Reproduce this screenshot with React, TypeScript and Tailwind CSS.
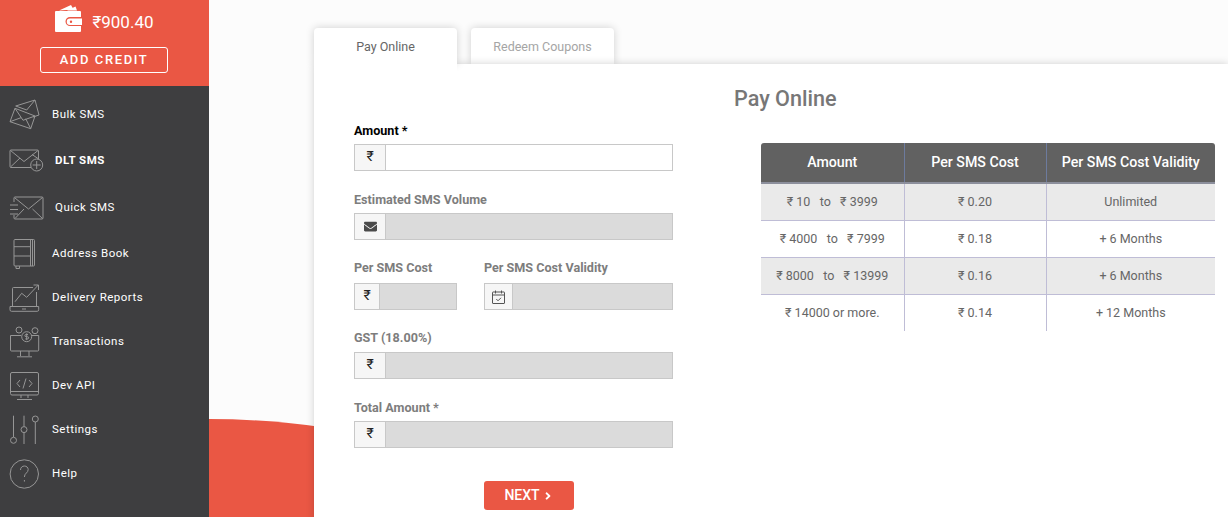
import { ReactNode } from "react";
import { FaAngleRight, FaEnvelope } from "react-icons/fa";

const iconClass = "overflow-visible fill-none stroke-[#969696]";

// viewBox numbers follow the sidebar's own pixel grid, one box per row
const NavIcon = ({ y, children }: { y: number; children: ReactNode }) => (
  <svg width="34" height="30" viewBox={`10 ${y} 34 30`} className={iconClass} strokeWidth="1">
    {children}
  </svg>
);

const NAV = [
  {
    label: "Bulk SMS",
    row: "h-[46px]",
    text: "",
    icon: (
      <NavIcon y={99}>
        <path d="M15.7 106 35 100l4 15-6 2" />
        <path d="m15.7 106 11 4 8.3-10" />
        <path d="m15 108.300 20 7.700-4.300 12.700-20.700-7z" />
        <path d="m15 108.300 8 12 12-4.300M10 121.700l11-4M30.700 128.700l-5-10" />
      </NavIcon>
    ),
  },
  {
    label: "DLT SMS",
    row: "h-[46px]",
    text: "ml-[3px] font-bold",
    icon: (
      <NavIcon y={145}>
        <path d="M31 167.500H11a1 1 0 0 1-1-1V151a1 1 0 0 1 1-1h26.500a1 1 0 0 1 1 1v8" />
        <path d="m10.500 150.500 13.500 11 14-11M10.500 167l9.500-9M38 158.500l-6-4" />
        <circle cx="36.700" cy="165" r="6" />
        <path d="M36.700 161v8M32.700 165h8" />
      </NavIcon>
    ),
  },
  {
    label: "Quick SMS",
    row: "h-[47px]",
    text: "ml-[3px]",
    icon: (
      <NavIcon y={192}>
        <path d="M14 202v-4a1 1 0 0 1 1-1h27a1 1 0 0 1 1 1v20a1 1 0 0 1-1 1H15a1 1 0 0 1-1-1v-3" />
        <path d="m15 198 13.500 11 14-11.500M15 218.500l9-9.500M42.500 218.500l-10-9.500" />
        <path d="M10 205h8M10 209.500h8M10 214h8" />
      </NavIcon>
    ),
  },
  {
    label: "Address Book",
    row: "h-[45px]",
    text: "",
    icon: (
      <NavIcon y={238}>
        <rect x="14" y="239.500" width="20.500" height="26.500" rx="1" />
        <path d="M30.500 239.500V266M32.500 239.500V266M14 246.700h16.500M14 256h16.500M16 266v2.500h3.500V266" />
      </NavIcon>
    ),
  },
  {
    label: "Delivery Reports",
    row: "h-[44px]",
    text: "",
    icon: (
      <NavIcon y={282}>
        <path d="M33 287.500H13.500a1 1 0 0 0-1 1V306M36.500 292v14" />
        <path d="M10 306.500h28.700v3.300a1.500 1.500 0 0 1-1.500 1.500H11.500a1.500 1.500 0 0 1-1.500-1.500zM22 309h4" />
        <path d="m15 301.700 6.700-8.400 5 4L38.300 285M33.500 285h5v5" />
      </NavIcon>
    ),
  },
  {
    label: "Transactions",
    row: "h-[44px]",
    text: "",
    icon: (
      <NavIcon y={326}>
        <path d="M21 335.500H10.500V350a1 1 0 0 0 1 1h26.200a1 1 0 0 0 1-1v-14.500H32" />
        <circle cx="26.700" cy="336.700" r="5" />
        <circle cx="19" cy="330" r="3" />
        <circle cx="35" cy="330.700" r="3" />
        <path d="M28 334.500h-2a1 1 0 0 0 0 2.200h1.500a1 1 0 0 1 0 2.200h-2.200M26.700 333.300v6.800M20.500 351v5M29 351v5M17 356.800h15" />
      </NavIcon>
    ),
  },
  {
    label: "Dev API",
    row: "h-[44px]",
    text: "",
    icon: (
      <NavIcon y={370}>
        <rect x="10.500" y="372.500" width="28" height="22.500" rx="1.500" />
        <path d="M10.500 391.500h28M21 395v3M28 395v3M17 399.500h15" />
        <path d="m20 380-3 3.500 3 3.500M29 380l3 3.500-3 3.500M26 378.500l-3 10" />
      </NavIcon>
    ),
  },
  {
    label: "Settings",
    row: "h-[44px]",
    text: "",
    icon: (
      <NavIcon y={414}>
        <path d="M13.500 415.700V437M24 415.700V426.500M24 432.700V444M35.300 422V444" />
        <circle cx="13.500" cy="440.300" r="3" />
        <circle cx="24" cy="429.600" r="3" />
        <circle cx="35.300" cy="419" r="3" />
      </NavIcon>
    ),
  },
  {
    label: "Help",
    row: "h-[44px]",
    text: "",
    icon: (
      <NavIcon y={458}>
        <circle cx="24.300" cy="474" r="14.200" />
        <path d="M20.500 470c0-2.500 1.800-4 3.900-4s3.800 1.500 3.800 3.600c0 3.300-3.800 3.500-3.800 7.400" />
        <path d="M24.400 480v1.600" />
      </NavIcon>
    ),
  },
];

const RATES = [
  { amount: "₹ 10   to   ₹ 3999", cost: "₹ 0.20", validity: "Unlimited" },
  { amount: "₹ 4000   to   ₹ 7999", cost: "₹ 0.18", validity: "+ 6 Months" },
  { amount: "₹ 8000   to   ₹ 13999", cost: "₹ 0.16", validity: "+ 6 Months" },
  { amount: "₹ 14000 or more.", cost: "₹ 0.14", validity: "+ 12 Months" },
];

const Rupee = () => <span className="-mt-[3px] text-[14px] leading-none text-[#222]">₹</span>;

const Field = ({
  label,
  prefix = <Rupee />,
  prefixWidth = "w-[31px]",
  labelGap = "mb-[7px]",
  active = false,
  className = "",
}: {
  label: string;
  prefix?: ReactNode;
  prefixWidth?: string;
  labelGap?: string;
  active?: boolean;
  className?: string;
}) => (
  <div className={className}>
    <label className={`block h-[14px] text-[12.600px] leading-[14px] font-bold ${labelGap} ${active ? "text-black" : "text-[#7d7d7d]"}`}>
      {label}
    </label>
    <div className="flex h-[27px] border border-[#c8c8c8]">
      <div className={`flex flex-none items-center justify-center border-r border-[#c8c8c8] bg-[#f6f6f6] ${prefixWidth}`}>
        {prefix}
      </div>
      <div className={`flex-1 ${active ? "bg-white" : "bg-[#dbdbdb]"}`} />
    </div>
  </div>
);

const App = () => (
  <div className="flex h-[517px] w-full overflow-hidden bg-[#fcfcfc] [font-family:Roboto,sans-serif]">
    <aside className="flex w-[209px] flex-none flex-col bg-[#3e3e40]">
      <div className="flex h-[86px] flex-none flex-col items-center bg-[#ea5744]">
        <div className="mt-[5px] flex h-[27px] items-center">
          <svg width="27" height="27" viewBox="54 5 27 27" className="fill-white">
            <path d="m58 10.500 12-5.500 2.500 4.500zM66 10.500l8.500-4 1.500 4z" />
            <path d="M55 11h24a1 1 0 0 1 1 1v5H69a4.500 4.500 0 0 0 0 9h11v5a1 1 0 0 1-1 1H55a1 1 0 0 1-1-1V12a1 1 0 0 1 1-1z" />
            <path d="M69 18.500h12V25H69a3.250 3.250 0 0 1 0-6.500zm1 2a1.200 1.200 0 1 0 0 2.400 1.200 1.200 0 0 0 0-2.400z" fillRule="evenodd" />
          </svg>
          <span className="ml-[10px] pt-[7px] text-[17px] leading-none text-white">₹900.40</span>
        </div>
        <button className="mt-[15px] -ml-[1px] h-[26px] w-[128px] rounded-[3px] border border-white text-[13px] font-medium tracking-[1.600px] text-white">
          ADD CREDIT
        </button>
      </div>
      <nav className="pt-[5px]">
        {NAV.map((item) => (
          <div key={item.label} className={`flex items-center pl-[10px] ${item.row}`}>
            <div className="flex w-[42px] flex-none">{item.icon}</div>
            <span className={`pt-[2px] text-[11.500px] tracking-[0.5px] text-white ${item.text}`}>{item.label}</span>
          </div>
        ))}
      </nav>
    </aside>

    <main className="relative flex-1 overflow-hidden pt-[28px] pl-[105px]">
      <div className="absolute top-[419px] left-[-787px] h-[1574px] w-[1574px] rounded-full bg-[#ea5744]" />

      <div className="relative flex gap-[14px]">
        <div className="relative z-10 flex h-[36px] w-[143px] items-center justify-center rounded-t-[4px] bg-white pt-[2px] text-[12.500px] text-[#666] shadow-[0_0_8px_rgba(0,0,0,0.18)]">
          Pay Online
          {/* hides the tab's own shadow where it joins the card */}
          <div className="absolute inset-x-0 top-full h-[8px] bg-white" />
        </div>
        <div className="flex h-[36px] w-[143px] items-center justify-center rounded-t-[4px] bg-white pt-[2px] text-[12.500px] text-[#a5a5a5] shadow-[0_0_8px_rgba(0,0,0,0.18)]">
          Redeem Coupons
        </div>
      </div>

      <div className="relative h-[460px] bg-white pt-[22px] pl-[40px] shadow-[0_0_8px_rgba(0,0,0,0.18)]">
        <h1 className="ml-[380px] h-[25px] text-[21.600px] leading-[25px] font-medium text-[#777]">Pay Online</h1>
        <div className="mt-[13px] flex">
          <form className="w-[319px]">
            <Field label="Amount *" labelGap="mb-[6px]" active />
            <Field
              className="mt-[22px]"
              label="Estimated SMS Volume"
              labelGap="mb-[6px]"
              prefix={<FaEnvelope className="text-[13px] text-[#4a4a4a]" />}
            />
            <div className="mt-[21px] flex gap-[27px]">
              <Field className="w-[103px]" label="Per SMS Cost" labelGap="mb-[8px]" prefixWidth="w-[25px]" />
              <Field
                className="flex-1"
                label="Per SMS Cost Validity"
                labelGap="mb-[8px]"
                prefixWidth="w-[28px]"
                prefix={
                  <svg width="13" height="14" viewBox="0 0 13 14" className="fill-none stroke-[#555]">
                    <rect x="0.500" y="2" width="12" height="11.500" rx="0.500" />
                    <path d="M0.500 5h12M3.500 0.500v3M9.500 0.500v3M4.300 9l1.700 1.800L9 7.800" />
                  </svg>
                }
              />
            </div>
            <Field className="mt-[21px]" label="GST (18.00%)" />
            <Field className="mt-[22px]" label="Total Amount *" labelGap="mb-[6px]" />
            <button
              type="button"
              className="mt-[33px] ml-[130px] flex h-[29px] w-[90px] items-center justify-center gap-[2px] rounded-[3px] bg-[#ea5744] text-[14px] font-medium text-white"
            >
              NEXT <FaAngleRight className="text-[12px]" />
            </button>
          </form>

          <table className="mt-[19px] ml-[88px] h-fit w-[454px] table-fixed border-collapse self-start text-center text-[12.500px] text-[#666]">
            <thead>
              <tr className="h-[40px] bg-[#616161] text-[14.200px] font-medium text-white">
                <th className="w-[143px] rounded-tl-[3px] border-r border-b-2 border-r-[#6d7b9e] border-b-[#8c8f9c] font-medium">Amount</th>
                <th className="w-[142px] border-r border-b-2 border-r-[#6d7b9e] border-b-[#8c8f9c] font-medium">Per SMS Cost</th>
                <th className="rounded-tr-[3px] border-b-2 border-b-[#8c8f9c] font-medium">Per SMS Cost Validity</th>
              </tr>
            </thead>
            <tbody>
              {RATES.map((rate, i) => (
                <tr key={rate.amount} className={`h-[37px] ${i % 2 === 0 ? "bg-[#eaeaea]" : "bg-white"}`}>
                  <td className={`border-r border-[#bfbdd6] pt-[2px] whitespace-pre ${i < 3 ? "border-b" : ""}`}>{rate.amount}</td>
                  <td className={`border-r border-[#bfbdd6] pt-[2px] ${i < 3 ? "border-b" : ""}`}>{rate.cost}</td>
                  <td className={`border-[#bfbdd6] pt-[2px] ${i < 3 ? "border-b" : ""}`}>{rate.validity}</td>
                </tr>
              ))}
            </tbody>
          </table>
        </div>
      </div>
    </main>
  </div>
);

export default App;
